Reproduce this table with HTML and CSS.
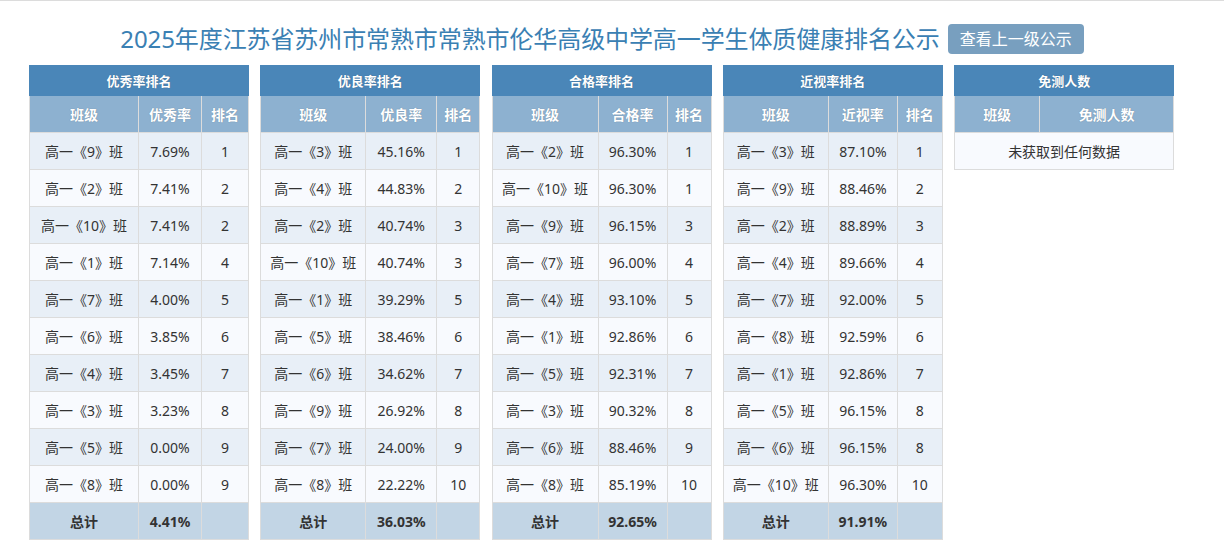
FILE: index.html
```html
<!DOCTYPE html>
<html lang="zh-CN">
<head>
<meta charset="utf-8">
<title>体质健康排名公示</title>
<link rel="stylesheet" href="styles.css">
</head>
<body>
<div class="topline"></div>
<div class="page">
  <div class="header">
    <h1 class="title">2025年度江苏省苏州市常熟市常熟市伦华高级中学高一学生体质健康排名公示</h1>
    <button class="btn">查看上一级公示</button>
  </div>
  <div class="tables">
    <table class="rank t1">
      <colgroup><col class="ca"><col class="cb"><col class="cc"></colgroup>
      <thead>
        <tr class="cap"><th colspan="3">优秀率排名</th></tr>
        <tr class="sub"><th>班级</th><th>优秀率</th><th>排名</th></tr>
      </thead>
      <tbody>
        <tr><td>高一《9》班</td><td>7.69%</td><td>1</td></tr>
        <tr><td>高一《2》班</td><td>7.41%</td><td>2</td></tr>
        <tr><td>高一《10》班</td><td>7.41%</td><td>2</td></tr>
        <tr><td>高一《1》班</td><td>7.14%</td><td>4</td></tr>
        <tr><td>高一《7》班</td><td>4.00%</td><td>5</td></tr>
        <tr><td>高一《6》班</td><td>3.85%</td><td>6</td></tr>
        <tr><td>高一《4》班</td><td>3.45%</td><td>7</td></tr>
        <tr><td>高一《3》班</td><td>3.23%</td><td>8</td></tr>
        <tr><td>高一《5》班</td><td>0.00%</td><td>9</td></tr>
        <tr><td>高一《8》班</td><td>0.00%</td><td>9</td></tr>
        <tr class="total"><td>总计</td><td>4.41%</td><td></td></tr>
      </tbody>
    </table>
    <table class="rank t2">
      <colgroup><col class="ca"><col class="cb"><col class="cc"></colgroup>
      <thead>
        <tr class="cap"><th colspan="3">优良率排名</th></tr>
        <tr class="sub"><th>班级</th><th>优良率</th><th>排名</th></tr>
      </thead>
      <tbody>
        <tr><td>高一《3》班</td><td>45.16%</td><td>1</td></tr>
        <tr><td>高一《4》班</td><td>44.83%</td><td>2</td></tr>
        <tr><td>高一《2》班</td><td>40.74%</td><td>3</td></tr>
        <tr><td>高一《10》班</td><td>40.74%</td><td>3</td></tr>
        <tr><td>高一《1》班</td><td>39.29%</td><td>5</td></tr>
        <tr><td>高一《5》班</td><td>38.46%</td><td>6</td></tr>
        <tr><td>高一《6》班</td><td>34.62%</td><td>7</td></tr>
        <tr><td>高一《9》班</td><td>26.92%</td><td>8</td></tr>
        <tr><td>高一《7》班</td><td>24.00%</td><td>9</td></tr>
        <tr><td>高一《8》班</td><td>22.22%</td><td>10</td></tr>
        <tr class="total"><td>总计</td><td>36.03%</td><td></td></tr>
      </tbody>
    </table>
    <table class="rank t3">
      <colgroup><col class="ca"><col class="cb"><col class="cc"></colgroup>
      <thead>
        <tr class="cap"><th colspan="3">合格率排名</th></tr>
        <tr class="sub"><th>班级</th><th>合格率</th><th>排名</th></tr>
      </thead>
      <tbody>
        <tr><td>高一《2》班</td><td>96.30%</td><td>1</td></tr>
        <tr><td>高一《10》班</td><td>96.30%</td><td>1</td></tr>
        <tr><td>高一《9》班</td><td>96.15%</td><td>3</td></tr>
        <tr><td>高一《7》班</td><td>96.00%</td><td>4</td></tr>
        <tr><td>高一《4》班</td><td>93.10%</td><td>5</td></tr>
        <tr><td>高一《1》班</td><td>92.86%</td><td>6</td></tr>
        <tr><td>高一《5》班</td><td>92.31%</td><td>7</td></tr>
        <tr><td>高一《3》班</td><td>90.32%</td><td>8</td></tr>
        <tr><td>高一《6》班</td><td>88.46%</td><td>9</td></tr>
        <tr><td>高一《8》班</td><td>85.19%</td><td>10</td></tr>
        <tr class="total"><td>总计</td><td>92.65%</td><td></td></tr>
      </tbody>
    </table>
    <table class="rank t4">
      <colgroup><col class="ca"><col class="cb"><col class="cc"></colgroup>
      <thead>
        <tr class="cap"><th colspan="3">近视率排名</th></tr>
        <tr class="sub"><th>班级</th><th>近视率</th><th>排名</th></tr>
      </thead>
      <tbody>
        <tr><td>高一《3》班</td><td>87.10%</td><td>1</td></tr>
        <tr><td>高一《9》班</td><td>88.46%</td><td>2</td></tr>
        <tr><td>高一《2》班</td><td>88.89%</td><td>3</td></tr>
        <tr><td>高一《4》班</td><td>89.66%</td><td>4</td></tr>
        <tr><td>高一《7》班</td><td>92.00%</td><td>5</td></tr>
        <tr><td>高一《8》班</td><td>92.59%</td><td>6</td></tr>
        <tr><td>高一《1》班</td><td>92.86%</td><td>7</td></tr>
        <tr><td>高一《5》班</td><td>96.15%</td><td>8</td></tr>
        <tr><td>高一《6》班</td><td>96.15%</td><td>8</td></tr>
        <tr><td>高一《10》班</td><td>96.30%</td><td>10</td></tr>
        <tr class="total"><td>总计</td><td>91.91%</td><td></td></tr>
      </tbody>
    </table>
    <table class="rank t5">
      <colgroup><col class="ca"><col class="cb"></colgroup>
      <thead>
        <tr class="cap"><th colspan="2">免测人数</th></tr>
        <tr class="sub"><th>班级</th><th>免测人数</th></tr>
      </thead>
      <tbody>
        <tr class="empty"><td colspan="2">未获取到任何数据</td></tr>
      </tbody>
    </table>
  </div>
</div>
</body>
</html>
```

FILE: styles.css
```css
* { box-sizing: border-box; }

html, body {
  margin: 0;
  padding: 0;
  background: #fff;
}

body {
  font-family: "Noto Sans", "Noto Sans CJK SC", sans-serif;
  color: #333;
}

.topline {
  height: 1px;
  background: #dcdcdc;
}

.page {
  width: 1146px;
  margin-left: 29px;
}

.header {
  display: flex;
  align-items: flex-start;
  justify-content: center;
  gap: 8px;
  padding-top: 23px;
  height: 64px;
}

.title {
  margin: 0;
  font-size: 24px;
  font-weight: 400;
  line-height: 30px;
  color: #3a80b3;
  letter-spacing: -0.1px;
  font-family: "Noto Sans", "Noto Sans CJK SC", sans-serif;
}

.btn {
  height: 30px;
  padding: 0 12px;
  border: none;
  border-radius: 4px;
  background: #789fbf;
  color: #fff;
  font-size: 16px;
  font-family: "Noto Sans", "Noto Sans CJK SC", sans-serif;
  line-height: 30px;
}

.tables {
  display: flex;
  align-items: flex-start;
  gap: 11.25px;
}

.rank {
  width: 219px;
  border-collapse: collapse;
  table-layout: fixed;
  border: 1px solid #dcdcdc;
  font-size: 14px;
}

.rank th,
.rank td {
  border: 1px solid #dcdcdc;
  text-align: center;
  padding: 0 2px;
  white-space: nowrap;
}

.rank .cap th {
  height: 30px;
  background: #4a86b8;
  color: #fff;
  font-size: 13px;
  font-weight: bold;
  border-color: #4a86b8;
  text-shadow: 0 0 1px rgba(0, 0, 0, 0.3);
}

.rank .sub th {
  height: 37px;
  background: #8db1d0;
  color: #fff;
  font-size: 14px;
  font-weight: bold;
  border-color: #dcdcdc;
  text-shadow: 0 0 1px rgba(0, 0, 0, 0.3);
}

.rank td {
  height: 37px;
  color: #333;
}

.rank tbody tr:nth-child(odd) td { background: #e8eff7; }
.rank tbody tr:nth-child(even) td { background: #f8fafe; }

.rank tbody tr.total td {
  background: #c2d5e5;
  font-weight: bold;
  color: #333;
}

.rank tbody tr.empty td { background: #f8fafe; }

.t1 .ca { width: 109px; }
.t1 .cb { width: 63px; }
.t1 .cc { width: 47px; }

.t2 .ca { width: 105px; }
.t2 .cb { width: 71px; }
.t2 .cc { width: 43px; }

.t3 .ca { width: 106px; }
.t3 .cb { width: 69px; }
.t3 .cc { width: 44px; }

.t4 .ca { width: 105px; }
.t4 .cb { width: 69px; }
.t4 .cc { width: 45px; }

.t5 .ca { width: 85px; }
.t5 .cb { width: 134px; }
```
